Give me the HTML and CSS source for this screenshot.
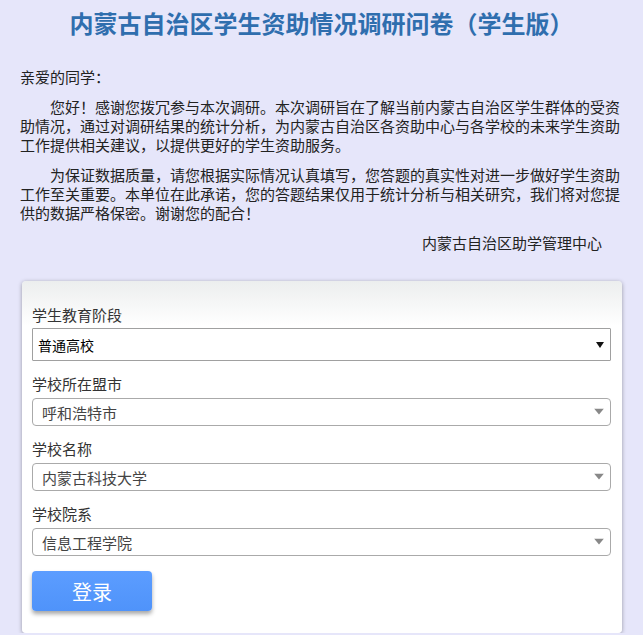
FILE: index.html
```html
<!DOCTYPE html>
<html lang="zh-CN">

<head>
    <meta charset="UTF-8">
    <meta name="viewport" content="width=device-width, initial-scale=1.0">
    <title>内蒙古自治区学生资助情况调研问卷（学生版）</title>
    <link rel="stylesheet" href="styles.css">
</head>

<body>
    <h1 class="title">内蒙古自治区学生资助情况调研问卷（学生版）</h1>

    <div class="intro">
        <p class="greet">亲爱的同学：</p>
        <p class="para">您好！感谢您拨冗参与本次调研。本次调研旨在了解当前内蒙古自治区学生群体的受资助情况，通过对调研结果的统计分析，为内蒙古自治区各资助中心与各学校的未来学生资助工作提供相关建议，以提供更好的学生资助服务。</p>
        <p class="para">为保证数据质量，请您根据实际情况认真填写，您答题的真实性对进一步做好学生资助工作至关重要。本单位在此承诺，您的答题结果仅用于统计分析与相关研究，我们将对您提供的数据严格保密。谢谢您的配合！</p>
        <p class="sign">内蒙古自治区助学管理中心</p>
    </div>

    <div class="panel">
        <form id="login-form">
            <div class="group">
                <label for="stage">学生教育阶段</label>
                <div class="select-wrap select-wrap--plain">
                    <select id="stage" class="select select--plain">
                        <option>普通高校</option>
                    </select>
                    <svg class="arrow" width="8" height="8" viewBox="0 0 8 8"><path d="M0 1H8L4 7Z" fill="#111"/></svg>
                </div>
            </div>

            <div class="group">
                <label for="city">学校所在盟市</label>
                <div class="select-wrap">
                    <select id="city" class="select">
                        <option>呼和浩特市</option>
                    </select>
                    <svg class="arrow" width="10" height="7" viewBox="0 0 10 7"><path d="M0 0H10L5 6Z" fill="#888"/></svg>
                </div>
            </div>

            <div class="group">
                <label for="school">学校名称</label>
                <div class="select-wrap">
                    <select id="school" class="select">
                        <option>内蒙古科技大学</option>
                    </select>
                    <svg class="arrow" width="10" height="7" viewBox="0 0 10 7"><path d="M0 0H10L5 6Z" fill="#888"/></svg>
                </div>
            </div>

            <div class="group">
                <label for="dept">学校院系</label>
                <div class="select-wrap">
                    <select id="dept" class="select">
                        <option>信息工程学院</option>
                    </select>
                    <svg class="arrow" width="10" height="7" viewBox="0 0 10 7"><path d="M0 0H10L5 6Z" fill="#888"/></svg>
                </div>
            </div>

            <button type="button" class="login-btn">登录</button>
        </form>
    </div>
</body>

</html>
```

FILE: styles.css
```css
body {
    margin: 0;
    padding: 0;
    background-color: #e6e6fa; /* lavender page */
    color: #222;
    font-family: "Noto Sans CJK SC", "Noto Sans", sans-serif;
}

.title {
    margin: 0;
    padding-top: 8px;
    font-size: 24px;
    line-height: 30px;
    font-weight: bold;
    text-align: center;
    color: #2f6eae;
}

.intro {
    padding: 0 20px;
    margin-top: 29px;
    font-size: 15px;
    line-height: 19px;
}

.intro p {
    margin: 0;
}

.greet {
    margin-bottom: 11px !important;
}

.para {
    text-indent: 2em;
    margin-bottom: 11px !important;
}

.sign {
    text-align: right;
    padding-right: 21px;
}

.panel {
    margin: 29px 21px 0 22px;
    padding: 24px 10px 22px;
    background: linear-gradient(#eceeee, #ffffff 45px);
    border-radius: 4px;
    box-shadow: 0 1px 4px rgba(0, 0, 0, 0.35);
}

.group {
    margin-bottom: 13px;
}

.group label {
    display: block;
    font-size: 15px;
    line-height: 20px;
    color: #333;
    margin-bottom: 4px;
}

.select-wrap {
    position: relative;
    width: 579px;
}

.select {
    appearance: none;
    -webkit-appearance: none;
    display: block;
    width: 100%;
    height: 28px;
    margin: 0;
    padding: 0 0 0 9px;
    border: 1px solid #aaa;
    border-radius: 4px;
    background-color: #fff;
    color: #444;
    font-family: inherit;
    font-size: 15px;
    box-sizing: border-box;
}

.select--plain {
    height: 33px;
    padding-left: 5px;
    border-color: #a0a0a0;
    border-radius: 1px;
    color: #000;
    font-size: 14px;
}

.select-wrap--plain {
    margin-top: -1px;
    margin-bottom: 2px;
}

.arrow {
    position: absolute;
    right: 7px;
    top: 50%;
    transform: translateY(-50%);
    pointer-events: none;
}

.login-btn {
    display: block;
    width: 120px;
    height: 40px;
    margin-top: 15px;
    border: none;
    border-radius: 4px;
    background: linear-gradient(#5c9dff, #4f93fa);
    color: #fff;
    font-family: inherit;
    font-size: 20px;
    cursor: pointer;
    box-shadow: 0 3px 4px rgba(0, 0, 0, 0.35);
}
```
